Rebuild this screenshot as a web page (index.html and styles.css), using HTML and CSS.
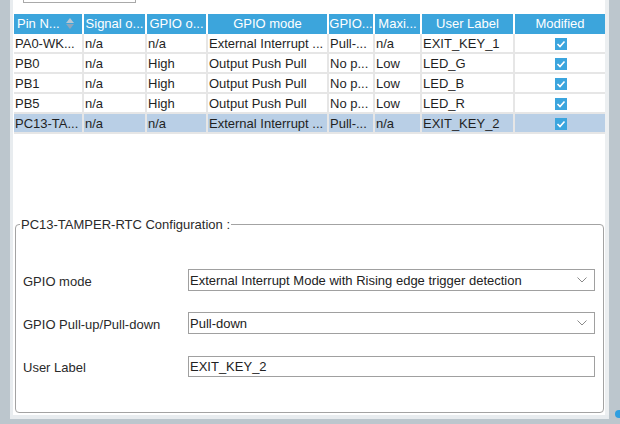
FILE: index.html
```html
<!DOCTYPE html>
<html>
<head>
<meta charset="utf-8">
<link rel="stylesheet" href="styles.css">
</head>
<body>
<div class="frame">
  <div class="lbar"></div>
  <div class="center">
    <div class="mid">
      <div class="ledge"></div>
      <div class="main">
        <div class="topbtn"></div>
        <div class="table">
          <div class="row head">
            <div class="cell c1 left">Pin N...<svg class="sort" width="8" height="11" viewBox="0 0 8 11"><polygon points="4,0 8,5 0,5" fill="#b9c7d3"/><polygon points="0,6 8,6 4,11" fill="#8fa6bb"/></svg></div>
            <div class="cell c2">Signal o...</div>
            <div class="cell c3">GPIO o...</div>
            <div class="cell c4">GPIO mode</div>
            <div class="cell c5">GPIO...</div>
            <div class="cell c6">Maxi...</div>
            <div class="cell c7">User Label</div>
            <div class="cell c8">Modified</div>
          </div>
          <div class="row">
            <div class="cell c1">PA0-WK...</div>
            <div class="cell c2">n/a</div>
            <div class="cell c3">n/a</div>
            <div class="cell c4">External Interrupt ...</div>
            <div class="cell c5">Pull-...</div>
            <div class="cell c6">n/a</div>
            <div class="cell c7">EXIT_KEY_1</div>
            <div class="cell c8"><span class="chk"><svg width="12" height="12" viewBox="0 0 12 12"><polyline points="2.5,6 5,8.5 9.5,3.5" fill="none" stroke="#fff" stroke-width="1.6"/></svg></span></div>
          </div>
          <div class="row">
            <div class="cell c1">PB0</div>
            <div class="cell c2">n/a</div>
            <div class="cell c3">High</div>
            <div class="cell c4">Output Push Pull</div>
            <div class="cell c5">No p...</div>
            <div class="cell c6">Low</div>
            <div class="cell c7">LED_G</div>
            <div class="cell c8"><span class="chk"><svg width="12" height="12" viewBox="0 0 12 12"><polyline points="2.5,6 5,8.5 9.5,3.5" fill="none" stroke="#fff" stroke-width="1.6"/></svg></span></div>
          </div>
          <div class="row">
            <div class="cell c1">PB1</div>
            <div class="cell c2">n/a</div>
            <div class="cell c3">High</div>
            <div class="cell c4">Output Push Pull</div>
            <div class="cell c5">No p...</div>
            <div class="cell c6">Low</div>
            <div class="cell c7">LED_B</div>
            <div class="cell c8"><span class="chk"><svg width="12" height="12" viewBox="0 0 12 12"><polyline points="2.5,6 5,8.5 9.5,3.5" fill="none" stroke="#fff" stroke-width="1.6"/></svg></span></div>
          </div>
          <div class="row">
            <div class="cell c1">PB5</div>
            <div class="cell c2">n/a</div>
            <div class="cell c3">High</div>
            <div class="cell c4">Output Push Pull</div>
            <div class="cell c5">No p...</div>
            <div class="cell c6">Low</div>
            <div class="cell c7">LED_R</div>
            <div class="cell c8"><span class="chk"><svg width="12" height="12" viewBox="0 0 12 12"><polyline points="2.5,6 5,8.5 9.5,3.5" fill="none" stroke="#fff" stroke-width="1.6"/></svg></span></div>
          </div>
          <div class="row sel">
            <div class="cell c1">PC13-TA...</div>
            <div class="cell c2">n/a</div>
            <div class="cell c3">n/a</div>
            <div class="cell c4">External Interrupt ...</div>
            <div class="cell c5">Pull-...</div>
            <div class="cell c6">n/a</div>
            <div class="cell c7">EXIT_KEY_2</div>
            <div class="cell c8"><span class="chk"><svg width="12" height="12" viewBox="0 0 12 12"><polyline points="2.5,6 5,8.5 9.5,3.5" fill="none" stroke="#fff" stroke-width="1.6"/></svg></span></div>
          </div>
        </div>
        <fieldset class="config">
          <legend>PC13-TAMPER-RTC Configuration :</legend>
          <div class="form">
            <div class="lbl">GPIO mode</div>
            <div class="combo"><span>External Interrupt Mode with Rising edge trigger detection</span><svg class="chev" width="10" height="6" viewBox="0 0 10 6"><polyline points="0.5,0.5 5,5 9.5,0.5" fill="none" stroke="#8a8a8a" stroke-width="1"/></svg></div>
            <div class="lbl">GPIO Pull-up/Pull-down</div>
            <div class="combo"><span>Pull-down</span><svg class="chev" width="10" height="6" viewBox="0 0 10 6"><polyline points="0.5,0.5 5,5 9.5,0.5" fill="none" stroke="#8a8a8a" stroke-width="1"/></svg></div>
            <div class="lbl">User Label</div>
            <div class="combo text"><span>EXIT_KEY_2</span></div>
          </div>
        </fieldset>
      </div>
      <div class="redge"></div>
    </div>
    <div class="bedge"></div>
  </div>
  <div class="rbar"><span class="dot"></span></div>
</div>
</body>
</html>
```

FILE: styles.css
```css
html, body {
  margin: 0;
  padding: 0;
}
body {
  width: 620px;
  height: 424px;
  overflow: hidden;
  background: #bcc6cd;
  font-family: "Liberation Sans", Arial, sans-serif;
  font-size: 13px;
  color: #1f1f1f;
}
.frame {
  display: flex;
  height: 424px;
}
.lbar {
  width: 10px;
  background: #bcc6cd;
}
.rbar {
  width: 11px;
  background: #bcc6cd;
  position: relative;
}
.dot {
  position: absolute;
  left: 6px;
  top: 410px;
  width: 8px;
  height: 8px;
  border-radius: 50%;
  background: #2f9fe0;
}
.center {
  width: 599px;
  display: flex;
  flex-direction: column;
}
.mid {
  display: flex;
  height: 415px;
}
.ledge {
  width: 3px;
  background: #e8ecef;
}
.redge {
  width: 4px;
  background: #eceff1;
}
.bedge {
  height: 4px;
  background: #e8ecef;
}
.main {
  width: 592px;
  background: #fff;
  display: flex;
  flex-direction: column;
}
.topbtn {
  margin-left: 10px;
  width: 111px;
  height: 2px;
  border: 1px solid #a9a9a9;
  border-top: none;
}
.table {
  margin-top: 11px;
  margin-left: 1px;
  display: flex;
  flex-direction: column;
}
.row {
  display: flex;
  height: 20px;
}
.cell {
  box-sizing: border-box;
  height: 20px;
  line-height: 20px;
  border-right: 2px solid #e6e6e6;
  border-bottom: 2px solid #e6e6e6;
  padding-left: 1px;
  white-space: nowrap;
  overflow: hidden;
}
.row.sel .cell {
  background: #b9cfe6;
  border-bottom-color: #e6e6e6;
}
.c1 { width: 70px; }
.c2 { width: 63px; }
.c3 { width: 61px; }
.c4 { width: 121px; }
.c5 { width: 46px; }
.c6 { width: 47px; }
.c7 { width: 93px; }
.c8 { width: 90px; border-right: none; text-align: center; }
.head .cell {
  background: #3ca5dc;
  color: #fff;
  text-align: center;
  border-right-color: #fff;
  border-bottom: none;
  line-height: 20px;
  padding: 0;
  position: relative;
}
.head .cell.left {
  text-align: left;
  padding-left: 3px;
}
.sort {
  position: absolute;
  left: 52px;
  top: 4px;
}
.chk {
  display: inline-block;
  width: 12px;
  height: 12px;
  background: #3ba5de;
  vertical-align: -2px;
}
.chk svg {
  display: block;
}
.config {
  margin: 83px 0 0 2px;
  width: 589px;
  box-sizing: border-box;
  height: 196px;
  border: 1px solid #a3a3a3;
  border-radius: 4px;
  padding: 0 8px 0 7px;
}
.config legend {
  padding: 0 1px;
  margin-left: -3px;
  color: #2a2a2a;
}
.form {
  display: grid;
  grid-template-columns: 165px 1fr;
  grid-auto-rows: 22px;
  row-gap: 21px;
  margin-top: 37px;
  align-items: center;
}
.lbl {
  color: #2a2a2a;
  padding-top: 2px;
}
.combo {
  box-sizing: border-box;
  height: 22px;
  border: 1px solid #a0a0a0;
  display: flex;
  align-items: center;
  justify-content: space-between;
  padding: 0 7px 0 1px;
  color: #222;
}
.combo.text {
  height: 21px;
}
.chev {
  display: block;
}
```
